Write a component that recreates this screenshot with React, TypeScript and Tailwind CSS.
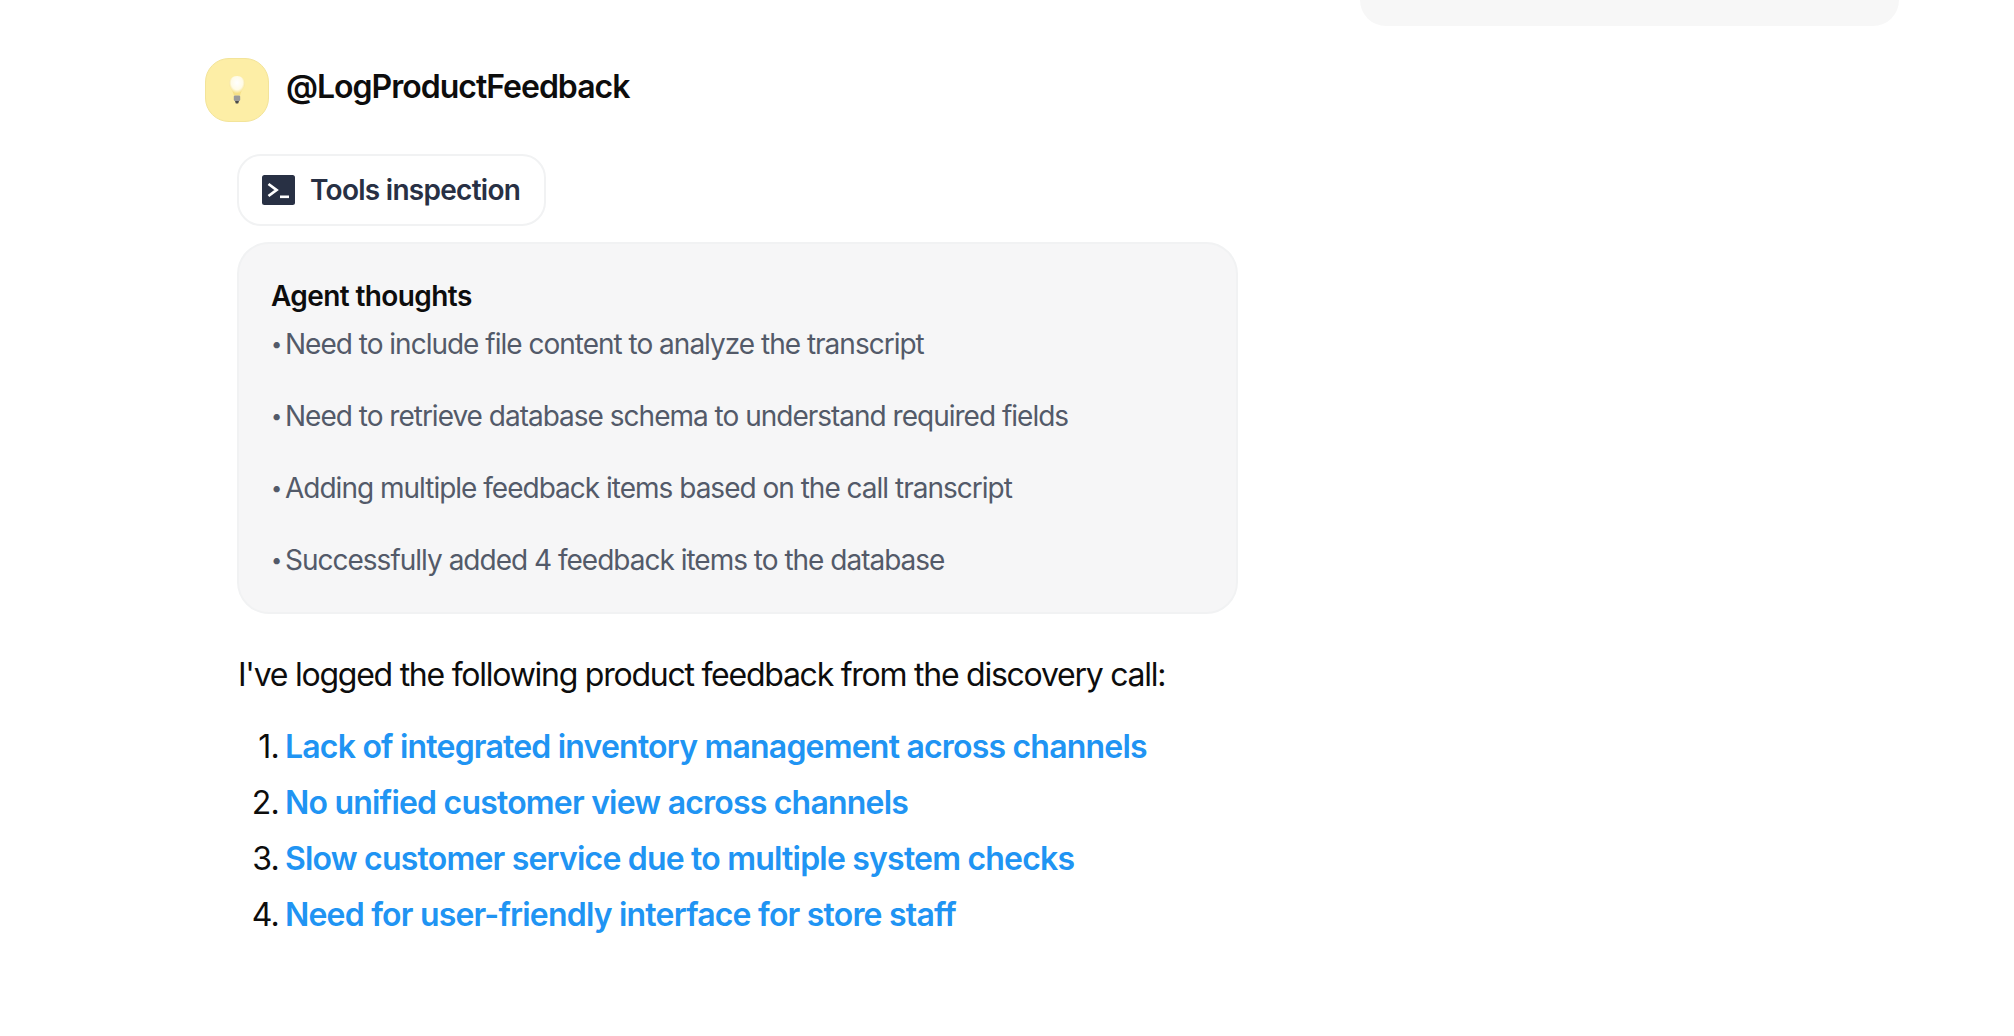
import React from "react";

const thoughts = [
  "Need to include file content to analyze the transcript",
  "Need to retrieve database schema to understand required fields",
  "Adding multiple feedback items based on the call transcript",
  "Successfully added 4 feedback items to the database",
];
const items = [
  "Lack of integrated inventory management across channels",
  "No unified customer view across channels",
  "Slow customer service due to multiple system checks",
  "Need for user-friendly interface for store staff",
];

export default function App() {
  return (
    <div className="h-[1036px] w-[2014px] overflow-hidden bg-white font-['Inter',sans-serif]">
      <div className="ml-[1360px] h-[26px] w-[539px] rounded-b-[34px] bg-[#f7f7f7]" />
      <div className="ml-[205px] mt-[32px] flex items-start">
        <div className="flex h-[64px] w-[64px] items-center justify-center rounded-[24px] border border-[#f3e49a] bg-[#fdeea6]">
          <svg width="18" height="30" viewBox="0 0 18 30">
            <defs>
              <radialGradient id="g" cx="50%" cy="35%" r="55%">
                <stop offset="0%" stopColor="#ffffff" />
                <stop offset="65%" stopColor="#fffbe6" />
                <stop offset="100%" stopColor="#f5df85" />
              </radialGradient>
            </defs>
            <path d="M9 1C4.2 1 1 4.3 1 8.3c0 4.4 3.8 6.5 4.8 12h6.4c1-5.5 4.8-7.6 4.8-12C17 4.3 13.8 1 9 1z" fill="url(#g)" />
            <rect x="5.8" y="20.5" width="6.4" height="5.5" rx="1.2" fill="#9a9a9a" />
            <path d="M7 26h4l-.8 2.6H7.8z" fill="#4a4a4a" />
          </svg>
        </div>
        <div className="ml-[17px] mt-[1px] text-[32px] leading-[56px] font-semibold tracking-[-1px] text-[#0d0d0d]">
          @LogProductFeedback
        </div>
      </div>
      <div className="ml-[237px] mt-[32px] w-[1001px]">
        <div className="flex h-[72px] w-[309px] items-center rounded-[24px] border-2 border-[#f1f2f3] pl-[23px]">
          <svg width="33" height="30" viewBox="0 0 33 30">
            <rect width="33" height="30" rx="2.5" fill="#283044" />
            <path d="M6.5 9l8 6-8 6" fill="none" stroke="#ffffff" strokeWidth="2.8" />
            <rect x="18" y="20.5" width="9" height="2.6" fill="#ffffff" />
          </svg>
          <span className="ml-[15px] text-[28px] font-semibold tracking-[-0.72px] text-[#283044]">Tools inspection</span>
        </div>
        <div className="mt-[16px] h-[372px] rounded-[32px] border-2 border-[#f1f2f3] bg-[#f6f6f7] px-[32px] pt-[32px]">
          <div className="text-[28px] leading-[40px] font-semibold tracking-[-0.6px] text-[#0d0d0d]">Agent thoughts</div>
          <div className="mt-[8px] flex flex-col gap-[32px]">
            {thoughts.map((t) => (
              <div key={t} className="flex items-center text-[28px] leading-[40px] tracking-[-1px] text-[#535a69]">
                <span className="w-[14px] shrink-0 text-[20px]">•</span>
                <span>{t}</span>
              </div>
            ))}
          </div>
        </div>
        <p className="mt-[37px] ml-[1px] text-[32px] leading-[48px] tracking-[-1.25px] text-[#0d0d0d]">
          I've logged the following product feedback from the discovery call:
        </p>
        <ol className="mt-[24px] flex flex-col gap-[8px]">
          {items.map((t, i) => (
            <li key={t} className="flex text-[32px] leading-[48px] tracking-[-0.8px] text-[#0d0d0d]">
              <span className="w-[42px] shrink-0 text-right">{i + 1}.</span>
              <a className="ml-[6px] font-semibold text-[#2094f3]">{t}</a>
            </li>
          ))}
        </ol>
      </div>
    </div>
  );
}
